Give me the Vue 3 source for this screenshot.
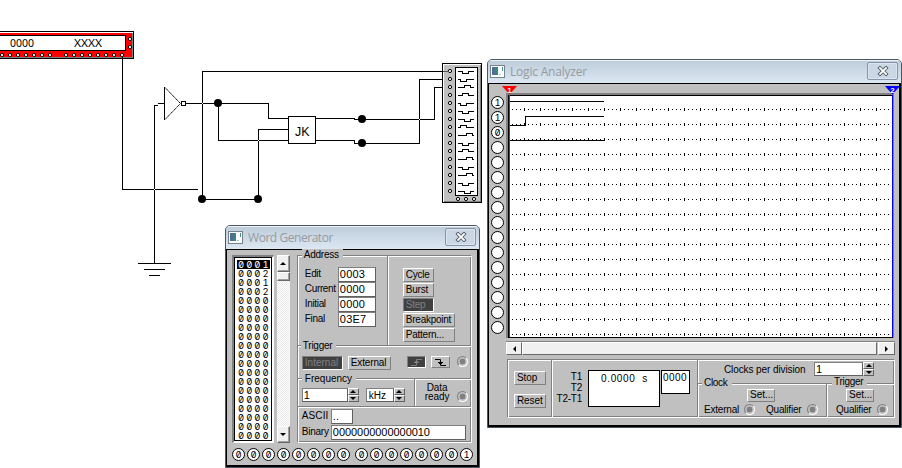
<script setup>
const words = ['0001', '0002', '0001', '0002', ...Array(16).fill('0000')]
const addresses = [['Edit', '0003'], ['Current', '0000'], ['Initial', '0000'], ['Final', '03E7']]
const actions = ['Cycle', 'Burst', 'Step', 'Breakpoint', 'Pattern...']
const bitsHigh = '00000000'.split('')
const bitsLow = '00000001'.split('')
const channels = ['1', '1', '0', ...Array(13).fill('')]

const redPins = [2, 10, 18, 26, 34, 42, 50, 66, 74, 82, 90, 98, 106, 114]
// [x offset, vertical step] of the pulse drawn for each analyzer channel
const pulses = [[4, 2], [2, 2], [6, -2], [4, -2], [2, 2], [4, 2], [6, 2], [2, -2], [8, -2], [4, 2], [4, -2], [8, -2], [4, 2], [8, -2], [4, 2], [6, 2]]
const pulsePath = (p, i) =>
  `M458 ${71.5 + i * 8}h${p[0] + 0.5}v${p[1]}h6v${-p[1]}h${9.5 - p[0]}`
const gridRows = Array.from({ length: 16 }, (_, i) => 13.5 + i * 15)
const junctions = [[218, 103], [202, 199], [258, 199], [362, 119], [362, 143]]
const crossings = [[154, 189], [202, 103], [258, 140], [419, 119]]
</script>

<template>
  <main class="desktop">
    <svg class="circuit" width="902" height="468" viewBox="0 0 902 468" shape-rendering="crispEdges">
      <rect x="-5" y="31.5" width="138.500" height="27" fill="#fff" stroke="#000" />
      <rect x="0" y="33" width="132" height="24" fill="#f00" />
      <path d="M0 57.5H132.500V33" fill="none" stroke="#808080" />
      <rect x="-5" y="35.500" width="130.500" height="15" fill="#fff" stroke="#000" />
      <text class="device" x="10" y="47" textLength="24" lengthAdjust="spacingAndGlyphs">0000</text>
      <text class="device" x="74" y="47" textLength="28" lengthAdjust="spacingAndGlyphs">XXXX</text>
      <g class="pin" shape-rendering="auto">
        <circle v-for="x in redPins" :key="x" :cx="x" cy="55" r="1.600" />
        <circle cx="122" cy="55" r="1.600" />
        <circle cx="130" cy="39" r="1.600" />
        <circle cx="130" cy="47" r="1.600" />
      </g>

      <rect x="442.5" y="63.5" width="39" height="139" fill="#c0c0c0" stroke="#000" />
      <path d="M443.5 202V64.500H481" fill="none" stroke="#fff" />
      <path d="M444 201.500H480.500V65" fill="none" stroke="#808080" />
      <rect x="455.5" y="67.5" width="22" height="128" fill="#fff" stroke="#000" />
      <g class="wire">
        <path v-for="(p, i) in pulses" :key="i" :d="pulsePath(p, i)" />
      </g>
      <g class="pin" shape-rendering="auto">
        <circle v-for="i in 16" :key="i" cx="450" :cy="63 + i * 8" r="1.600" />
        <circle v-for="i in 3" :key="'b' + i" :cx="450 + i * 8" cy="199" r="1.600" />
      </g>

      <g class="wire">
        <path d="M122.500 57V189.500H198" />
        <path d="M158 105.500H154.500V263.500M158 103.500H164" />
        <path d="M138 263.500H171M144 269.500H165M149 275.500H160" />
        <path d="M164.500 87V120" />
        <path d="M165 87.500L180.500 103.500L165 119.500" stroke-dasharray="1.6 .4" shape-rendering="auto" />
        <rect x="181.500" y="101.500" width="4" height="4" />
        <path d="M186 103.500H268.500V118.500H288" />
        <path d="M218.500 103V140.500H288" />
        <path d="M443 71.500H202.500V199.500H258.500V129.500H288" />
        <path d="M316 118.500H354.500V119.500H434.500V87.500H443" />
        <path d="M316 140.500H354.500V143.500H419.500V79.500H443" />
        <rect x="288.500" y="116.500" width="27" height="27" fill="#fff" />
      </g>
      <path d="M443 71.500H449" stroke="#555" />
      <text class="jk" x="295" y="136" textLength="14.5" lengthAdjust="spacingAndGlyphs">JK</text>
      <circle v-for="(j, i) in junctions" :key="i" :cx="j[0]" :cy="j[1]" r="4" shape-rendering="auto" />
      <rect v-for="(c, i) in crossings" :key="'c' + i" :x="c[0]" :y="c[1]" width="1" height="1" fill="#fff" />
    </svg>

    <section class="window generator">
      <header class="titlebar">
        <svg class="app-icon" width="15" height="13" viewBox="0 0 15 13">
          <rect x=".5" y=".5" width="14" height="12" fill="#fff" stroke="#73828c" />
          <rect x="2" y="2" width="6" height="8" fill="#37877c" /><path d="M2 2h3v8H2z" fill="#4f6c91" />
          <path d="M9.500 9.500h1M12.500 2v4" stroke="#478c89" />
        </svg>
        <h1>Word Generator</h1>
        <button class="close"><svg width="12" height="10" viewBox="0 0 12 10"><path d="M3 2l6 6M9 2L3 8" stroke="#505966" stroke-width="3.600" stroke-linecap="square" /><path d="M3 2l6 6M9 2L3 8" stroke="#fff" stroke-width="1.800" stroke-linecap="square" /></svg></button>
      </header>
      <div class="gen-body">
        <div class="gen-main">
          <ol class="words"><li v-for="(w, i) in words" :key="i" :class="{ picked: i === 0 }">{{ w }}</li></ol>
          <div class="vscroll">
            <button class="raised arrow-btn"><i class="arrow up"></i></button>
            <div class="raised thumb"></div>
            <div class="space"></div>
            <button class="raised arrow-btn"><i class="arrow down"></i></button>
          </div>
          <div class="etched gen-panel">
            <div class="address">
              <div class="fields">
                <span class="legend">Address</span>
                <label v-for="a in addresses" :key="a[0]"><span>{{ a[0] }}</span><b class="input">{{ a[1] }}</b></label>
              </div>
              <div class="actions">
                <button v-for="(a, i) in actions" :key="a" class="btn" :class="{ dark: i === 2, wide: i > 2 }">{{ a }}</button>
              </div>
            </div>
            <div class="rule trigger">
              <span class="legend">Trigger</span>
              <div class="trigger-row">
                <button class="btn dark internal">Internal</button>
                <button class="btn external">External</button>
                <button class="btn dark edge"><svg width="15" height="9" viewBox="0 0 15 9"><path d="M2 7.500H7.500V1.500H13M5 4.500H10M6 3.500H9" /></svg></button>
                <button class="btn edge fall"><svg width="15" height="9" viewBox="0 0 15 9"><path d="M2 1.500H7.500V7.500H13M5 4.500H10M6 5.500H9" /></svg></button>
                <i class="lamp"></i>
              </div>
            </div>
            <div class="rule frequency">
              <div class="freq-left">
                <span class="legend">Frequency</span>
                <div class="freq-row">
                  <b class="input freq">1</b><span class="spinner"><i><u class="arrow up"></u></i><i><u class="arrow down"></u></i></span>
                  <b class="input unit">kHz</b><span class="spinner"><i><u class="arrow up"></u></i><i><u class="arrow down"></u></i></span>
                </div>
              </div>
              <div class="ready"><span>Data<br>ready</span><i class="lamp"></i></div>
            </div>
            <div class="rule output">
              <label><span class="ascii">ASCII</span><b class="input short">..</b></label>
              <label><span>Binary</span><b class="input binary">0000000000000010</b></label>
            </div>
          </div>
        </div>
        <div class="bits">
          <div><i v-for="(b, i) in bitsHigh" :key="i" class="bit">{{ b }}</i></div>
          <div><i v-for="(b, i) in bitsLow" :key="i" class="bit">{{ b }}</i></div>
        </div>
      </div>
    </section>

    <section class="window analyzer">
      <header class="titlebar">
        <svg class="app-icon" width="15" height="13" viewBox="0 0 15 13">
          <rect x=".5" y=".5" width="14" height="12" fill="#fff" stroke="#73828c" />
          <rect x="2" y="2" width="6" height="8" fill="#37877c" /><path d="M2 2h3v8H2z" fill="#4f6c91" />
          <path d="M9.500 9.500h1M12.500 2v4" stroke="#478c89" />
        </svg>
        <h1>Logic Analyzer</h1>
        <button class="close"><svg width="12" height="10" viewBox="0 0 12 10"><path d="M3 2l6 6M9 2L3 8" stroke="#505966" stroke-width="3.600" stroke-linecap="square" /><path d="M3 2l6 6M9 2L3 8" stroke="#fff" stroke-width="1.800" stroke-linecap="square" /></svg></button>
      </header>
      <div class="ana-body">
        <div class="channels"><i v-for="(c, i) in channels" :key="i" class="bit">{{ c }}</i></div>
        <div class="ana-main">
          <svg class="plot" width="389" height="245" viewBox="0 0 389 245" shape-rendering="crispEdges">
            <rect width="388" height="245" fill="#808080" />
            <rect x="2" y="2" width="385" height="243" fill="#000" />
            <rect x="3" y="3" width="384" height="241" fill="#fff" />
            <g transform="translate(0 3)">
              <path v-for="y in gridRows" :key="y" :d="`M6 ${y}H384`" stroke="#000" stroke-dasharray="1 3" />
              <path v-for="y in gridRows" :key="'t' + y" :d="`M18 ${y}H384`" stroke="#000" stroke-width="3" stroke-dasharray="1 15" />
            </g>
            <path class="wire" d="M4 8.500H98M4 32.500H19.500V23.500H98M4 47.500H98" />
            <path d="M3.500 2V244" stroke="#f00" />
            <path d="M386.500 2V244" stroke="#00f" />
          </svg>
          <div class="hscroll">
            <button class="raised"><i class="arrow left"></i></button>
            <div class="raised grow"></div>
            <button class="raised right-btn"><i class="arrow right"></i></button>
          </div>
          <div class="etched ana-panel">
            <div class="run"><button class="btn">Stop</button><button class="btn">Reset</button></div>
            <div class="times">
              <div class="time-labels">T1<br>T2<br>T2-T1</div>
              <output class="readout">0.0000&nbsp; s</output>
              <output class="readout code">0000</output>
            </div>
            <div class="settings">
              <div class="division"><span>Clocks per division</span><b class="input">1</b><span class="spinner"><i><u class="arrow up"></u></i><i><u class="arrow down"></u></i></span></div>
              <div class="sources">
                <div class="rule clock">
                  <span class="legend">Clock</span>
                  <button class="btn">Set...</button>
                  <p><span class="ext">External</span><i class="lamp"></i><span class="qual">Qualifier</span><i class="lamp"></i></p>
                </div>
                <div class="rule trig">
                  <span class="legend">Trigger</span>
                  <button class="btn">Set...</button>
                  <p><span class="qual">Qualifier</span><i class="lamp"></i></p>
                </div>
              </div>
            </div>
          </div>
        </div>
      </div>
      <svg class="cursor first" width="15" height="9" viewBox="0 0 15 9"><path d="M0 0H15L7.500 8.500Z" fill="#f00" /><text x="5.200" y="6.500">1</text></svg>
      <svg class="cursor second" width="15" height="9" viewBox="0 0 15 9"><path d="M0 0H15L7.500 8.500Z" fill="#00f" /><text x="5.200" y="6.500">2</text></svg>
    </section>
  </main>
</template>

<style>
body { background: #fff; }
</style>

<style scoped>
* { box-sizing: border-box; margin: 0; padding: 0; }
.desktop { position: relative; width: 902px; height: 468px; overflow: hidden; background: #fff; color: #000; font: 10px/11px "Liberation Sans", Arial, sans-serif; }
.circuit { display: block; }
.wire { fill: none; stroke: #000; }
.pin circle { fill: #fff; stroke: #000; stroke-width: 1; }
.device { font: 11px "Noto Sans", sans-serif; }
.jk { font: 12px "Liberation Sans", sans-serif; }
button { font: inherit; color: inherit; }
i, u, b { font-style: normal; font-weight: normal; text-decoration: none; }

.window { position: absolute; border: 1px solid #4a5763; border-radius: 5px 5px 0 0; background: #c0c0c0; overflow: hidden; }
.generator { left: 225px; top: 225px; width: 255px; height: 243px; }
.analyzer { left: 487px; top: 59px; width: 415px; height: 369px; }
.titlebar { display: flex; align-items: center; height: 23px; padding: 0 3px 0 2px; background: linear-gradient(#bfcddb, #dce7f2); border-top: 1px solid #eef3f8; }
.app-icon { flex: none; margin-top: -1px; }
h1 { flex: 1; margin-left: 5px; font: 12px/20px "Open Sans", sans-serif; letter-spacing: -.2px; color: #969a9f; }
.generator h1 { letter-spacing: -.45px; }
.close { display: flex; align-items: center; justify-content: center; width: 31px; height: 18px; margin-top: -2px; border: 1px solid #8793aa; border-radius: 2px; background: #cbd7e5; box-shadow: inset 0 0 0 1px #dde6ef; }

.btn { height: 14px; border: 1px solid; border-color: #fff #808080 #808080 #fff; background: #c0c0c0; text-align: left; padding: 0 0 1px 2px; line-height: 11px; white-space: nowrap; letter-spacing: -.25px; }
.btn.dark { background: #404040; color: #808080; border-color: #808080 #fff #fff #808080; }
.input { display: block; height: 15px; padding-left: 1px; background: #fff; border: 1px solid; border-color: #808080 #606060 #606060 #808080; font: 11px/13px "Liberation Sans", sans-serif; white-space: nowrap; }
.etched { border: 1px solid #808080; border-right-color: #fff; border-bottom-color: #fff; box-shadow: inset 1px 1px #fff, inset -1px -1px #808080; }
.rule { border-top: 1px solid #808080; box-shadow: inset 0 1px #fff; }
.legend { display: block; width: max-content; height: 11px; margin-top: -6px; padding: 0 4px 0 2px; background: #c0c0c0; letter-spacing: -.25px; }
.lamp { display: block; flex: none; width: 11px; height: 11px; border: 1px solid #808080; border-right-color: #fff; border-bottom-color: #fff; border-radius: 50%; background: radial-gradient(circle, #808080 0 2.700px, #c0c0c0 3.200px); }
.raised { display: flex; align-items: center; justify-content: center; background: #f0f0f0; border: 1px solid; border-color: #fff #696969 #696969 #fff; box-shadow: inset -1px -1px #a0a0a0; }
.arrow { display: block; width: 0; height: 0; border: 3px solid transparent; }
.arrow.up { border-top: 0; border-bottom-color: #000; }
.arrow.down { border-bottom: 0; border-top-color: #000; }
.arrow.left { border-left: 0; border-right-color: #000; }
.arrow.right { border-right: 0; border-left-color: #000; }
.spinner { display: flex; flex-direction: column; width: 11px; height: 14px; background: #c0c0c0; }
.spinner i { display: flex; flex: 1; align-items: center; justify-content: center; border: 1px solid; border-color: #fff #606060 #606060 #fff; }
.bit { display: block; flex: none; width: 13px; height: 13px; border: 1px solid #000; border-radius: 50%; background: #fff; font: 9.500px/11px Inter, sans-serif; font-feature-settings: "zero", "tnum"; text-align: center; }

.gen-body { height: 218px; padding: 5px 5px 0 5px; border: 1px solid #000; border-width: 1px 2px 2px 1px; }
.gen-main { display: flex; height: 188px; }
.words { list-style: none; width: 42px; height: 188px; border: 2px solid #808080; border-right-color: #fff; border-bottom-color: #fff; border-right-width: 1px; border-bottom-width: 1px; background: #fff; padding: 3px 2px; outline: 1px solid #000; outline-offset: -3px; }
.words li { height: 9px; padding-left: 1px; font: 9.500px/9px Inter, sans-serif; font-feature-settings: "zero", "tnum"; letter-spacing: 2px; margin-left: 1px; width: 33px; white-space: nowrap; }
.words .picked { background: #000; color: #fff; }
.vscroll { display: flex; flex-direction: column; width: 13px; height: 188px; margin: 0 7px 0 3px; background: repeating-conic-gradient(#fff 0 25%, #e9e9e9 0 50%) 0 0 / 2px 2px; }
.arrow-btn { height: 17px; width: 13px; }
.thumb { height: 9px; }
.space { flex: 1; }
.gen-panel { display: grid; grid-template-rows: 89px 33px 28px 36px; width: 176px; height: 188px; }
.address { display: flex; padding-left: 4px; }
.fields { width: 86px; border-right: 1px solid #808080; box-shadow: 1px 0 #fff; }
.fields .legend { margin-top: -7px; }
.fields label { display: flex; height: 15px; padding-left: 3px; line-height: 14px; letter-spacing: -.35px; }
.fields .legend + label { margin-top: 7px; }
.fields label span { width: 33px; }
.fields .input { width: 38px; letter-spacing: .2px; }
.actions { display: flex; flex-direction: column; gap: 1px; padding: 12px 0 0 15px; }
.actions .btn { width: 31px; }
.actions .wide { width: 52px; }
.trigger { padding-left: 3px; }
.trigger-row { display: flex; margin-top: 5px; padding-left: 1px; }
.trigger-row .internal { width: 41px; letter-spacing: 0; }
.trigger-row .external { width: 43px; margin-left: 5px; letter-spacing: -.15px; }
.edge { display: flex; align-items: center; justify-content: center; width: 19px; height: 12px; margin-left: 16px; padding: 0; }
.edge.fall { margin-left: 5px; }
.edge path { fill: none; stroke: currentColor; }
.trigger-row .lamp { margin-left: 7px; }
.frequency { display: flex; }
.freq-left { width: 117px; border-right: 1px solid #808080; box-shadow: 1px 0 #fff; padding-left: 4px; }
.freq-left .legend { padding-left: 3px; letter-spacing: 0; }
.freq-row { display: flex; margin-top: 4px; }
.freq-row .freq { width: 46px; height: 14px; }
.freq-row .unit { width: 28px; height: 14px; margin-left: 7px; padding-left: 2px; font-size: 10px; }
.ready { display: flex; padding: 4px 0 0 10px; line-height: 9px; text-align: center; letter-spacing: -.1px; }
.ready .lamp { margin: 8px 0 0 8px; }
.output { padding: 2px 0 0 4px; }
.output label { display: flex; line-height: 14px; letter-spacing: -.25px; }
.output label + label { margin-top: 1px; }
.output label span { width: 29px; }
.output .ascii { letter-spacing: .1px; }
.output .short { width: 22px; letter-spacing: 0; }
.output .binary { width: 135px; height: 15px; letter-spacing: -.05px; }
.bits { display: flex; gap: 5px; margin-top: 5px; }
.bits div { display: flex; gap: 2px; }

.ana-body { display: flex; height: 344px; border: 1px solid #000; border-width: 1px 2px 2px 1px; }
.channels { display: flex; flex-direction: column; gap: 2px; padding: 12px 0 0 2px; width: 17px; }
.ana-main { display: flex; flex-direction: column; width: 389px; padding-top: 9px; }
.plot { display: block; flex: none; }
.hscroll { display: flex; flex: none; height: 14px; margin: 3px 0 4px; border-top: 1px solid #808080; }
.hscroll .raised { width: 16px; box-shadow: none; }
.hscroll .raised.grow { flex: 1; }
.hscroll .right-btn { width: 17px; margin-left: 1px; }
.ana-panel { display: flex; width: 388px; height: 59px; margin-left: 1px; }
.run { display: flex; flex-direction: column; gap: 9px; width: 44px; padding: 11px 0 0 6px; border-right: 1px solid #808080; box-shadow: 1px 0 #fff; }
.run .btn { width: 32px; letter-spacing: -.1px; }
.times { display: flex; width: 146px; padding-top: 10px; border-right: 1px solid #808080; box-shadow: 1px 0 #fff; }
.time-labels { width: 30px; padding-top: 1px; text-align: right; letter-spacing: -.25px; white-space: nowrap; }
.readout { display: block; width: 72px; height: 37px; margin-left: 6px; padding: 2px 0 0 12px; border: 1px solid #000; background: #fff; letter-spacing: .65px; white-space: pre; }
.readout.code { width: 29px; height: 24px; margin-left: 1px; padding: 1px 0 0 1px; letter-spacing: .4px; }
.settings { flex: 1; }
.division { display: flex; height: 23px; padding: 2px 0 0 26px; }
.division > span:first-child { width: 90px; padding-top: 2px; letter-spacing: -.1px; white-space: nowrap; }
.division .input { width: 49px; height: 14px; }
.sources { display: flex; height: 34px; }
.clock { width: 129px; border-right: 1px solid #808080; box-shadow: inset 0 1px #fff, 1px 0 #fff; padding-left: 4px; }
.trig { flex: 1; padding-left: 5px; }
.sources .btn { display: block; width: 28px; height: 13px; margin: 1px 0 0 45px; line-height: 10px; letter-spacing: 0; }
.sources .trig .btn { margin: 2px 0 0 14px; }
.sources .legend { margin-top: -7px; letter-spacing: -.3px; }
.sources .trig .legend { margin-top: -8px; }
.sources p { display: flex; padding: 2px 0 0 2px; letter-spacing: -.2px; }
.sources .ext { width: 40px; }
.sources .qual { width: 41px; }
.clock .lamp + .qual { margin-left: 11px; }
.sources .trig p { padding-left: 4px; }

.cursor { position: absolute; top: 26px; }
.cursor text { fill: #fff; font: bold 8px "Liberation Sans", sans-serif; }
.first { left: 14px; }
.second { left: 397px; }
</style>
